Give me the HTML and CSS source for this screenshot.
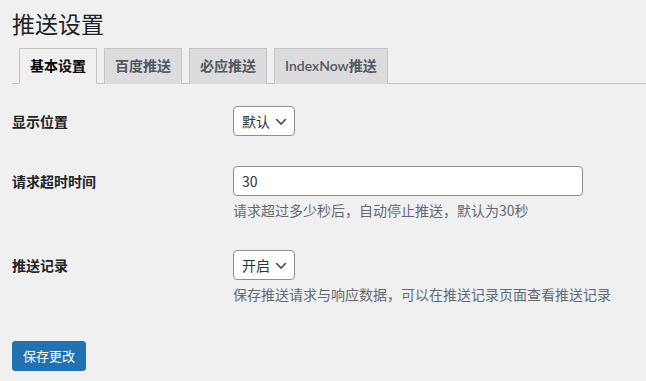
FILE: index.html
```html
<!DOCTYPE html>
<html lang="zh-CN">
<head>
    <meta charset="UTF-8">
    <meta name="viewport" content="width=device-width, initial-scale=1.0">
    <title>推送设置</title>
    <link rel="stylesheet" href="styles.css">
</head>
<body>
    <div class="wrap">
        <h1>推送设置</h1>

        <nav class="nav-tab-wrapper">
            <a class="nav-tab nav-tab-active" href="#">基本设置</a>
            <a class="nav-tab" href="#">百度推送</a>
            <a class="nav-tab" href="#">必应推送</a>
            <a class="nav-tab" href="#">IndexNow推送</a>
        </nav>

        <form>
            <table class="form-table">
                <tr>
                    <th>显示位置</th>
                    <td>
                        <select class="select">
                            <option>默认</option>
                        </select>
                    </td>
                </tr>
                <tr>
                    <th>请求超时时间</th>
                    <td>
                        <input type="text" class="regular-text" value="30">
                        <p class="description">请求超过多少秒后，自动停止推送，默认为30秒</p>
                    </td>
                </tr>
                <tr>
                    <th>推送记录</th>
                    <td>
                        <select class="select">
                            <option>开启</option>
                        </select>
                        <p class="description">保存推送请求与响应数据，可以在推送记录页面查看推送记录</p>
                    </td>
                </tr>
            </table>

            <p class="submit">
                <button type="button" class="button-primary">保存更改</button>
            </p>
        </form>
    </div>
</body>
</html>
```

FILE: styles.css
```css
body {
    margin: 0;
    background: #f0f0f1;
    color: #1d2327;
    font-family: "Noto Sans CJK SC", "Noto Sans", sans-serif;
    font-size: 14px;
}
.wrap {
    padding-left: 12px;
}
h1 {
    margin: 0;
    padding: 8px 0 1px;
    font-size: 23px;
    font-weight: 400;
    line-height: 30px;
}
.nav-tab-wrapper {
    display: flex;
    padding: 9px 0 0 7px;
    border-bottom: 1px solid #c3c4c7;
}
.nav-tab {
    display: block;
    margin-right: 7px;
    margin-bottom: -1px;
    padding: 5px 10px;
    border: 1px solid #c3c4c7;
    border-bottom: none;
    background: #dcdcde;
    color: #50575e;
    font-family: Lato, "Noto Sans CJK SC", sans-serif;
    font-size: 14px;
    font-weight: 600;
    line-height: 24px;
    text-decoration: none;
}
.nav-tab-active {
    background: #f0f0f1;
    color: #000;
    border-bottom: 1px solid #f0f0f1;
}
.form-table {
    margin-top: 7px;
    border-collapse: collapse;
}
.form-table th {
    width: 211px;
    padding: 21px 10px 20px 0;
    text-align: left;
    vertical-align: top;
    font-weight: 600;
    line-height: 18px;
}
.form-table td {
    padding: 15px 0;
    vertical-align: top;
}
.select {
    display: block;
    height: 30px;
    padding: 0 24px 0 8px;
    border: 1px solid #8c8f94;
    border-radius: 4px;
    background: #fff url("data:image/svg+xml;charset=US-ASCII,%3Csvg%20width%3D%2220%22%20height%3D%2220%22%20xmlns%3D%22http%3A%2F%2Fwww.w3.org%2F2000%2Fsvg%22%3E%3Cpath%20d%3D%22M5%206l5%205%205-5%202%201-7%207-7-7%202-1z%22%20fill%3D%22%23555%22%2F%3E%3C%2Fsvg%3E") no-repeat right 5px top 55%;
    background-size: 16px 16px;
    color: #2c3338;
    font-family: inherit;
    font-size: 14px;
    line-height: 28px;
    appearance: none;
    -webkit-appearance: none;
}
.regular-text {
    display: block;
    box-sizing: border-box;
    width: 350px;
    height: 30px;
    padding: 0 8px;
    border: 1px solid #8c8f94;
    border-radius: 4px;
    background: #fff;
    color: #2c3338;
    font-family: inherit;
    font-size: 14px;
}
.description {
    margin: 4px 0 0;
    color: #646970;
    font-size: 14px;
    line-height: 20px;
}
.submit {
    margin: 22px 0 0;
}
.button-primary {
    height: 30px;
    padding: 0 10px;
    border: 1px solid #2271b1;
    border-radius: 3px;
    background: #2271b1;
    color: #fff;
    font-family: inherit;
    font-size: 13px;
    line-height: 28px;
}
```
